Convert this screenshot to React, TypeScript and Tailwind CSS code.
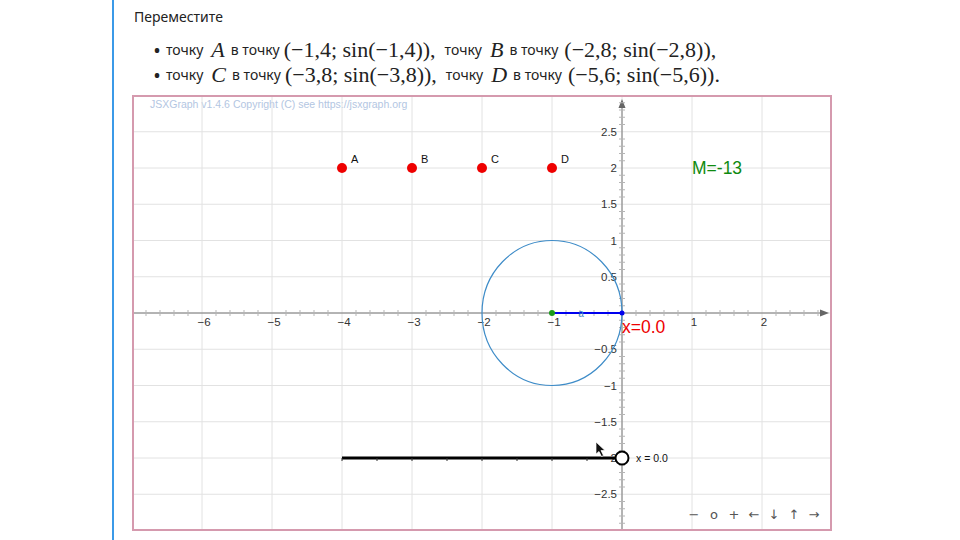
import React from "react";

const X = (x: number) => 622 + 70 * x;
const Y = (y: number) => 313 - 72.5 * y;

const fmt = (v: number) => (v < 0 ? "\u2212" + String(-v) : String(v));

function Board() {
  const vGrid = [-7, -6, -5, -4, -3, -2, -1, 0, 1, 2, 3];
  const hGrid = [-3, -2.5, -2, -1.5, -1, -0.5, 0, 0.5, 1, 1.5, 2, 2.5];
  const xMinor: number[] = [];
  for (let k = -36; k <= 15; k++) if (k % 5 !== 0) xMinor.push(k / 5);
  const yMinor: number[] = [];
  for (let k = -30; k <= 29; k++) if (k % 5 !== 0) yMinor.push(k / 10);
  const xLabels = [-6, -5, -4, -3, -2, -1, 1, 2];
  const yLabels = [2.5, 2, 1.5, 1, 0.5, -0.5, -1, -1.5, -2, -2.5];
  const pts = [
    { n: "A", x: -4 },
    { n: "B", x: -3 },
    { n: "C", x: -2 },
    { n: "D", x: -1 },
  ];
  const sliderTicks: number[] = [];
  for (let s = 342; s <= 622; s += 35) sliderTicks.push(s);
  const nav = ["−", "o", "+", "←", "↓", "↑", "→"];

  return (
    <div className="relative h-[436px] w-[700px] border-2 border-[#d59aae] bg-white">
      <svg width={696} height={432} viewBox="134 97 696 432" className="block">
        <g fontFamily="'Liberation Sans', Arial, sans-serif">
          <text x={150} y={108} fontSize={10.5} fill="#b3c6e2">
            JSXGraph v1.4.6 Copyright (C) see https://jsxgraph.org
          </text>
          {vGrid.map((g) => (
            <line key={"v" + g} x1={X(g)} x2={X(g)} y1={97} y2={529} stroke="#e2e2e2" strokeWidth={1} />
          ))}
          {hGrid.map((g) => (
            <line key={"h" + g} x1={134} x2={830} y1={Y(g)} y2={Y(g)} stroke="#e2e2e2" strokeWidth={1} />
          ))}
          {/* axes */}
          <line x1={134} x2={823} y1={313} y2={313} stroke="#777" strokeWidth={1} />
          <polygon points="829,313 820,309.5 820,316.5" fill="#666" />
          <line x1={622} x2={622} y1={529} y2={105} stroke="#777" strokeWidth={1} />
          <polygon points="622,99 618.5,108 625.5,108" fill="#666" />
          {xMinor.map((t) => (
            <line key={"xm" + t} x1={X(t)} x2={X(t)} y1={310} y2={316} stroke="#b5b5b5" strokeWidth={1} />
          ))}
          {yMinor.map((t) => (
            <line key={"ym" + t} x1={619} x2={625} y1={Y(t)} y2={Y(t)} stroke="#b5b5b5" strokeWidth={1} />
          ))}
          {xLabels.map((l) => (
            <text key={"xl" + l} x={X(l) + 2} y={326} fontSize={11.5} fill="#333" textAnchor="middle">
              {fmt(l)}
            </text>
          ))}
          {yLabels.map((l) => (
            <text key={"yl" + l} x={617} y={Y(l) + 4} fontSize={11.5} fill="#333" textAnchor="end">
              {fmt(l)}
            </text>
          ))}
          {/* circle and radius */}
          <ellipse cx={552} cy={313} rx={70} ry={72.5} fill="none" stroke="#3e8cc8" strokeWidth={1.2} />
          <line x1={552} x2={622} y1={313} y2={313} stroke="#0000ee" strokeWidth={2} />
          <text x={581} y={317} fontSize={10} fill="#3e8cc8" textAnchor="middle">
            a
          </text>
          <circle cx={552} cy={313} r={3} fill="#1a9a1a" />
          <circle cx={622} cy={313} r={2.5} fill="#0000ee" />
          {/* points */}
          {pts.map((p) => (
            <g key={p.n}>
              <circle cx={X(p.x)} cy={168} r={5} fill="#ee0000" />
              <text x={X(p.x) + 9} y={163} fontSize={11} fill="#111">
                {p.n}
              </text>
            </g>
          ))}
          <text x={692} y={174} fontSize={17.5} fill="#0f8a0f">
            M=-13
          </text>
          <text x={622} y={333} fontSize={17.5} fill="#ee0000">
            x=0.0
          </text>
          {/* slider */}
          <line x1={342} x2={622} y1={458} y2={458} stroke="#000" strokeWidth={3} />
          {sliderTicks.map((s) => (
            <line key={"st" + s} x1={s} x2={s} y1={458} y2={461} stroke="#333" strokeWidth={1} />
          ))}
          <circle cx={622} cy={458} r={6.5} fill="#fff" stroke="#000" strokeWidth={2} />
          <text x={636} y={462} fontSize={10.5} fill="#111">
            x = 0.0
          </text>
          {/* mouse cursor */}
          <polygon
            points="596,442 596,454 599,451.5 601.5,456.5 603.5,455.5 601,450.5 605,450.5"
            fill="#111"
            stroke="#fff"
            strokeWidth={0.7}
          />
        </g>
      </svg>
      <div className="absolute bottom-[5px] right-[6px] flex items-center font-['DejaVu_Sans',sans-serif] text-[13px] leading-[18px] text-[#555]">
        {nav.map((n) => (
          <span key={n} className="w-[20px] text-center">
            {n}
          </span>
        ))}
      </div>
    </div>
  );
}

const serif = "font-['Liberation_Serif',serif] text-[22px]";

function Item({ a, c1, b, c2 }: { a: string; c1: string; b: string; c2: string }) {
  return (
    <li className="flex h-[25px] items-center whitespace-nowrap">
      <span className="mr-[3px] w-[9px] text-[16px] font-bold">•</span>
      <span>точку</span>
      <span className={"ml-[8px] mr-[6px] italic " + serif}>{a}</span>
      <span>в точку</span>
      <span className={"ml-[4px] " + serif}>{c1}</span>
      <span className="ml-[9px]">точку</span>
      <span className={"ml-[8px] mr-[6px] italic " + serif}>{b}</span>
      <span>в точку</span>
      <span className={"ml-[6px] " + serif}>{c2}</span>
    </li>
  );
}

export default function App() {
  return (
    <div className="h-[540px] w-[960px] overflow-hidden bg-white">
      <div className="ml-[112px] h-[540px] border-l-2 border-[#3b9ae8] pl-[18px] pt-[6px] font-['Noto_Sans',sans-serif] text-[#222]">
        <p className="ml-[2px] text-[14px] leading-[22px]">Переместите</p>
        <ul className="mt-[9px] pl-[22px] text-[14px]">
          <Item a="A" c1="(−1,4; sin(−1,4))," b="B" c2="(−2,8; sin(−2,8)),"></Item>
          <Item a="C" c1="(−3,8; sin(−3,8))," b="D" c2="(−5,6; sin(−5,6))."></Item>
        </ul>
        <div className="mt-[8px]">
          <Board />
        </div>
      </div>
    </div>
  );
}
